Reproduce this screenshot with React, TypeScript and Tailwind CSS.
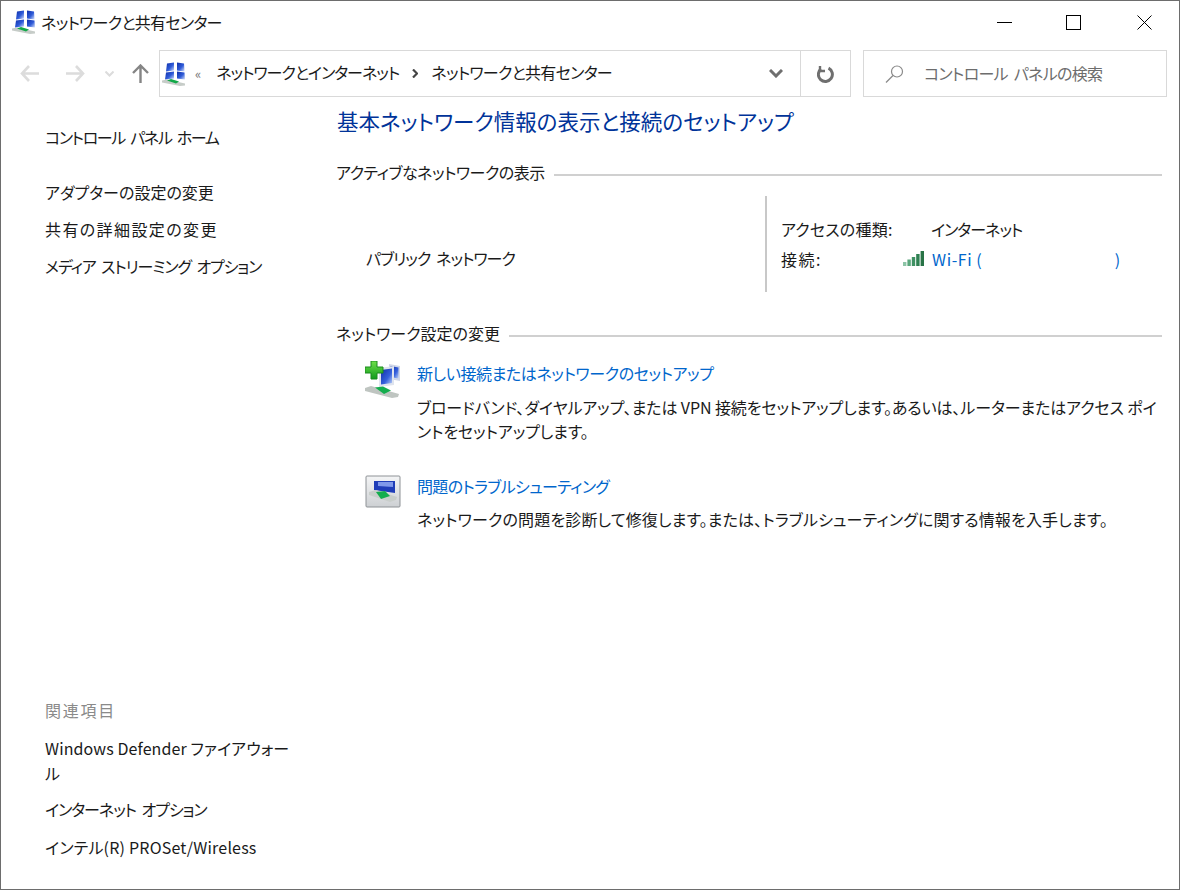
const font = "font-['Noto_Sans_CJK_JP','Noto_Sans',sans-serif] [font-feature-settings:'palt']";

function NetworkIcon() {
  return (
    <svg width="24" height="24" viewBox="0 0 24 24">
      <defs>
        <linearGradient id="pane" x1="0" y1="0" x2="1" y2="1">
          <stop offset="0" stopColor="#0f2fa8" />
          <stop offset="0.55" stopColor="#2f5bd8" />
          <stop offset="1" stopColor="#dbe5fa" />
        </linearGradient>
      </defs>
      <path d="M5 1.500l7-1v8l-8 1z" fill="url(#pane)" />
      <path d="M15 .5l7 1 .5 8-7.500-1z" fill="url(#pane)" />
      <path d="M4 10.500l8-1v7l-9 1z" fill="url(#pane)" />
      <path d="M15 9.500l7.500 1 .5 7-8-1z" fill="url(#pane)" />
      <path d="M0 18.500l5-1 18 4v2l-5 .5L0 20.500z" fill="#c6ccc8" />
      <path d="M5 18.500l4-1.500 8 2.500-3 2z" fill="#12a848" />
    </svg>
  );
}

function NewConnectionIcon() {
  return (
    <svg width="38" height="38" viewBox="0 0 38 38">
      <defs>
        <linearGradient id="screen" x1="0" y1="0" x2="1" y2="1">
          <stop offset="0" stopColor="#0f2fa8" />
          <stop offset="0.6" stopColor="#3560dc" />
          <stop offset="1" stopColor="#bcd0f6" />
        </linearGradient>
        <linearGradient id="plus" x1="0" y1="0" x2="0" y2="1">
          <stop offset="0" stopColor="#6fe04a" />
          <stop offset="1" stopColor="#119a1c" />
        </linearGradient>
      </defs>
      <path d="M24 3l11 2v15l-11-2z" fill="#cfd6e8" />
      <path d="M25.500 5l8 1.400v11l-8-1.400z" fill="url(#screen)" />
      <path d="M14 7l15-2v19l-15 2z" fill="#dfe4ee" />
      <path d="M16 9l11-1.500v14.500l-11 1.500z" fill="url(#screen)" />
      <path d="M0 27l6-2 28 8-1 3-6 1L0 30z" fill="#bfc5c1" />
      <path d="M10 26.500l8-1 8 4-7 3.500z" fill="#14ad4d" />
      <path d="M6 0h6v6h6v6h-6v6H6v-6H0V6h6z" fill="url(#plus)" stroke="#1a8a1f" />
    </svg>
  );
}

function TroubleshootIcon() {
  return (
    <svg width="36" height="33" viewBox="0 0 36 33" className="mt-px">
      <defs>
        <linearGradient id="frame" x1="0" y1="0" x2="0" y2="1">
          <stop offset="0" stopColor="#f4f5f6" />
          <stop offset="1" stopColor="#cdd0d3" />
        </linearGradient>
      </defs>
      <rect x="1" y="1" width="34" height="31" rx="1" fill="url(#frame)" stroke="#8e9296" />
      <path d="M9 6h21v12L9 15z" fill="#1f3db8" />
      <path d="M13 7h15v5l-15-1z" fill="#7f98ea" />
      <path d="M4 17l7-2 21 7-1 3-6 2L4 20z" fill="#c9cecb" />
      <path d="M11 17l9-1 5 5-9 3z" fill="#14ad4d" />
    </svg>
  );
}

function SignalIcon() {
  return (
    <svg width="22" height="18" viewBox="0 0 22 18">
      <rect x="0" y="12" width="3.400" height="4" fill="#8cc4a6" />
      <rect x="4.400" y="9.500" width="3.400" height="6.500" fill="#5aa67c" />
      <rect x="8.800" y="7" width="3.400" height="9" fill="#3f9163" />
      <rect x="13.200" y="4" width="3.400" height="12" fill="#2f8052" />
      <rect x="17.600" y="1" width="3.400" height="15" fill="#287346" />
    </svg>
  );
}

export default function App() {
  return (
    <div className={`${font} h-[890px] w-[1180px] overflow-hidden border border-[#6d6d6d] bg-white text-[#1a1a1a]`}>
      {/* title bar */}
      <div className="flex h-[49px] items-center pb-[7px]">
        <div className="ml-[11px]">
          <NetworkIcon />
        </div>
        <span className="ml-[5px] text-[16px] tracking-[-0.7px]">ネットワークと共有センター</span>
        <div className="ml-auto flex items-center pr-[27px]">
          <svg width="15" height="15" viewBox="0 0 15 15">
            <path d="M0 7.500h15" stroke="#000" />
          </svg>
          <svg width="15" height="15" viewBox="0 0 15 15" className="ml-[54px]">
            <rect x=".5" y=".5" width="14" height="14" fill="none" stroke="#000" />
          </svg>
          <svg width="15" height="15" viewBox="0 0 15 15" className="ml-[56px]">
            <path d="M.5.5l14 14M14.500.5l-14 14" stroke="#000" />
          </svg>
        </div>
      </div>

      {/* address bar */}
      <div className="flex h-[47px] items-center">
        <div className="flex w-[158px] items-center pl-[19px]">
          <svg width="19" height="17" viewBox="0 0 19 17" fill="none" stroke="#dcdcdc" strokeWidth="2.6">
            <path d="M9 1L2 8.500 9 16M2 8.500h17" />
          </svg>
          <svg width="19" height="17" viewBox="0 0 19 17" fill="none" stroke="#dcdcdc" strokeWidth="2.6" className="ml-[27px]">
            <path d="M10 1l7 7.500L10 16M17 8.500H0" />
          </svg>
          <svg width="9" height="6" viewBox="0 0 9 6" fill="none" stroke="#dcdcdc" strokeWidth="2" className="ml-[20px]">
            <path d="M.5.5l4 4 4-4" />
          </svg>
          <svg width="17" height="19" viewBox="0 0 17 19" fill="none" stroke="#858585" strokeWidth="2.4" className="ml-[18px]">
            <path d="M1 9l7.500-7.500L16 9M8.500 2v17" />
          </svg>
        </div>
        <div className="flex h-[47px] w-[692px] items-center border border-[#d9d9d9]">
          <div className="ml-[2px]">
            <NetworkIcon />
          </div>
          <span className="ml-[9px] text-[13px] text-[#777]">«</span>
          <span className="-mt-[3px] ml-[15px] text-[16px] tracking-[-1px]">ネットワークとインターネット</span>
          <svg width="6" height="9" viewBox="0 0 6 9" fill="none" stroke="#444" strokeWidth="2.2" className="ml-[13px]">
            <path d="M1 .5l4 4-4 4" />
          </svg>
          <span className="-mt-[3px] ml-[13px] text-[16px] tracking-[-0.7px]">ネットワークと共有センター</span>
          <svg width="14" height="9" viewBox="0 0 14 9" fill="none" stroke="#6f6f6f" strokeWidth="3" className="ml-auto mr-[17px]">
            <path d="M1 1l6 6 6-6" />
          </svg>
          <div className="flex h-full w-[50px] items-center justify-center border-l border-[#d9d9d9]">
            <svg width="17" height="18" viewBox="0 0 17 18" fill="none" stroke="#6f6f6f" strokeWidth="3">
              <path d="M11.500 3.200A7 7 0 1 1 4 4" />
              <path d="M3 1v5h5" strokeWidth="2.4" />
            </svg>
          </div>
        </div>
        <div className="ml-[12px] flex h-[47px] w-[304px] items-center border border-[#d9d9d9] pl-[21px]">
          <svg width="19" height="18" viewBox="0 0 19 18" fill="none" stroke="#8a8a8a" strokeWidth="1.2">
            <circle cx="12" cy="6.500" r="5.500" />
            <path d="M8 10.500L1 17.500" />
          </svg>
          <span className="-mt-[2px] ml-[20px] text-[16px] tracking-[-0.7px] text-[#6d6d6d] [word-spacing:3px]">コントロール パネルの検索</span>
        </div>
      </div>

      <div className="flex h-[792px]">
        {/* sidebar */}
        <div className="flex w-[336px] flex-col pl-[44px] text-[16px]">
          <div className="mt-[28px] leading-6 tracking-[-1.35px] [word-spacing:3px]">コントロール パネル ホーム</div>
          <div className="mt-[31px] leading-6">アダプターの設定の変更</div>
          <div className="mt-[13px] leading-6 tracking-[1.4px]">共有の詳細設定の変更</div>
          <div className="mt-[13px] leading-6 tracking-[-1.1px] [word-spacing:3px]">メディア ストリーミング オプション</div>
          <div className="mt-auto leading-6 tracking-[1.75px] text-[#8a8a8a]">関連項目</div>
          <div className="mt-[14px] w-[246px] leading-[25px] tracking-[0.1px]">Windows Defender ファイアウォール</div>
          <div className="mt-[11px] leading-6 tracking-[-1.05px] [word-spacing:3px]">インターネット オプション</div>
          <div className="mb-[30px] mt-[14px] leading-6 tracking-[0.2px]">インテル(R) PROSet/Wireless</div>
        </div>

        {/* main */}
        <div className="flex-1 pr-[17px] text-[16px]">
          <h1 className="mt-[8px] text-[21.5px] font-normal leading-8 text-[#003399]">
            基本ネットワーク情報の表示と接続のセットアップ
          </h1>
          <div className="mt-[23px] flex items-center gap-[9px]">
            <span className="-ml-px whitespace-nowrap leading-6 tracking-[-0.5px]">アクティブなネットワークの表示</span>
            <div className="mt-[6px] h-[2px] flex-1 bg-[#d0d0d0]" />
          </div>
          <div className="mt-[12px] flex h-[96px]">
            <div className="flex w-[428px] items-center pb-px pl-[29px] pt-[29px] tracking-[-0.95px] [word-spacing:3px]">パブリック ネットワーク</div>
            <div className="flex flex-col justify-center gap-[6px] border-l-2 border-[#c8c8c8] pb-[1px] pl-[14px]">
              <div className="flex h-6 items-center">
                <span className="w-[150px] tracking-[0.2px]">アクセスの種類:</span>
                <span className="tracking-[-1px]">インターネット</span>
              </div>
              <div className="flex h-6 items-center">
                <span className="w-[122px] tracking-[1.5px]">接続:</span>
                <SignalIcon />
                <span className="ml-[7px] tracking-[0.6px] text-[#0066cc]">Wi-Fi</span>
                <span className="ml-[4px] text-[#0066cc]">(</span>
                <span className="ml-[133px] text-[#0066cc]">)</span>
              </div>
            </div>
          </div>
          <div className="mt-[29px] flex items-center gap-[9px]">
            <span className="-ml-px whitespace-nowrap leading-6">ネットワーク設定の変更</span>
            <div className="mt-[5px] h-[2px] flex-1 bg-[#d0d0d0]" />
          </div>
          <div className="mt-[16px] flex pl-[28px]">
            <NewConnectionIcon />
            <div className="ml-[14px] flex-1">
              <div className="leading-6 tracking-[-0.4px] text-[#0066cc]">新しい接続またはネットワークのセットアップ</div>
              <p className="mt-[10px] leading-6 tracking-[-0.1px]">
                ブロードバンド、ダイヤルアップ、または VPN 接続をセットアップします。あるいは、ルーターまたはアクセス ポイントをセットアップします。
              </p>
            </div>
          </div>
          <div className="mt-[31px] flex pl-[28px]">
            <TroubleshootIcon />
            <div className="ml-[16px] flex-1">
              <div className="leading-6 tracking-[-0.65px] text-[#0066cc]">問題のトラブルシューティング</div>
              <p className="mt-[9px] leading-6 tracking-[0.15px]">
                ネットワークの問題を診断して修復します。または、トラブルシューティングに関する情報を入手します。
              </p>
            </div>
          </div>
        </div>
      </div>
    </div>
  );
}
